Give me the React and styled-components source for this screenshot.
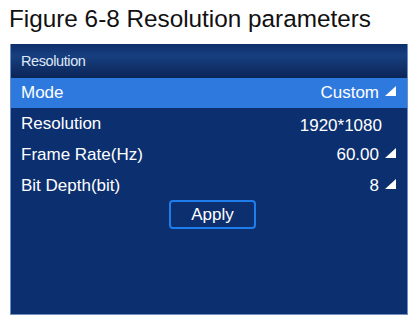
import React from "react"
import styled, { createGlobalStyle } from "styled-components"

const Global = createGlobalStyle`
body {
  margin: 0;
  background: #ffffff;
  font-family: "Liberation Sans", Arial, sans-serif;
}`

const Page = styled.div`
width: 418px;
height: 324px;
padding: 5px 10px 0 10px;
box-sizing: border-box;
display: flex;
flex-direction: column;`

const Caption = styled.h1`
margin: 0 0 0 -1px;
font-size: 24.3px;
line-height: 28px;
font-weight: normal;
color: #111;`

const Panel = styled.div`
margin-top: 11px;
height: 270px;
background: #0b2f6f;
border: 1px solid #6f8fc2;
border-top: none;
display: flex;
flex-direction: column;`

const Header = styled.div`
height: 34px;
padding-left: 10px;
display: flex;
align-items: center;
color: #dfe8f6;
font-size: 14.5px;
letter-spacing: -0.4px;
background: linear-gradient(#0e2f6a 0%, #173f80 35%, #102f66 75%, #0a2557 100%);`

const Row = styled.div`
height: ${p => p.$h || 31}px;
padding: 0 11px 0 10px;
display: flex;
align-items: center;
justify-content: space-between;
color: #ffffff;
font-size: 17px;
background: ${p => (p.$active ? "#2e79de" : "transparent")};`

const Value = styled.span`
display: flex;
align-items: center;
gap: 6px;
margin-top: ${p => p.$drop || 0}px;
margin-right: ${p => (p.$plain ? 14 : 0)}px;`

const Arrow = () => (
  <svg width="11" height="10" viewBox="0 0 11 10" style={{ marginTop: -4 }}>
    <polygon points="0,10 11,0 11,10" fill="#ffffff" />
  </svg>
)

const Footer = styled.div`
display: flex;
justify-content: center;
margin-top: -1px;`

const Button = styled.button`
width: 87px;
height: 29px;
margin-left: 7px;
border: 2px solid #1f7ceb;
border-radius: 4px;
background: #0b2f6f;
color: #ffffff;
font-family: "Liberation Sans", Arial, sans-serif;
font-size: 17px;
padding: 0;`

const rows = [
  { label: "Resolution", value: "1920*1080", plain: true, drop: 4 },
  { label: "Frame Rate(Hz)", value: "60.00" },
  { label: "Bit Depth(bit)", value: "8" },
]

const App = () => (
  <>
    <Global />
    <Page>
      <Caption>Figure 6-8 Resolution parameters</Caption>
      <Panel>
        <Header>Resolution</Header>
        <Row $active $h={30}>
          <span>Mode</span>
          <Value>Custom <Arrow /></Value>
        </Row>
        {rows.map(r => (
          <Row key={r.label}>
            <span>{r.label}</span>
            <Value $plain={r.plain} $drop={r.drop}>
              {r.value}
              {!r.plain && <Arrow />}
            </Value>
          </Row>
        ))}
        <Footer>
          <Button>Apply</Button>
        </Footer>
      </Panel>
    </Page>
  </>
)

export default App
